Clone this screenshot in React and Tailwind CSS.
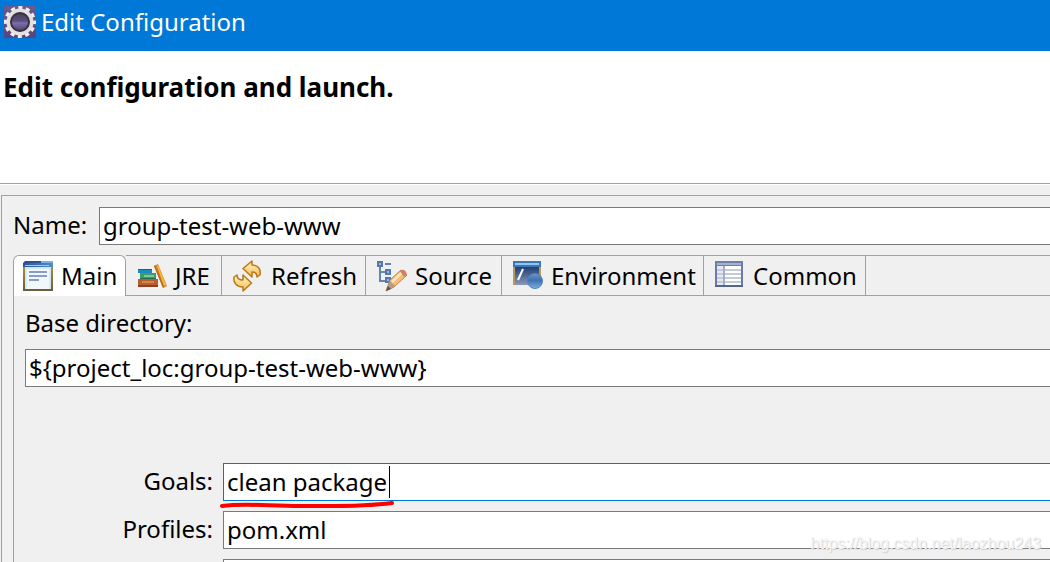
import React, { useState } from 'react';

function EclipseIcon() {
  return (
    <svg viewBox="0 0 32 32" className="w-8 h-8 shrink-0" aria-hidden="true">
      <defs>
        <linearGradient id="gearBg" x1="0" y1="0" x2="0" y2="1">
          <stop offset="0" stopColor="#6b5a91" />
          <stop offset="1" stopColor="#5a4284" />
        </linearGradient>
        <linearGradient id="gearCore" x1="0" y1="0" x2="0" y2="1">
          <stop offset="0" stopColor="#45405a" />
          <stop offset="0.45" stopColor="#5b4f80" />
          <stop offset="0.55" stopColor="#7d6ea8" />
          <stop offset="1" stopColor="#4d4272" />
        </linearGradient>
      </defs>
      <rect width="32" height="32" fill="url(#gearBg)" />
      <circle cx="16" cy="16" r="14" fill="none" stroke="#f0eeec" strokeWidth="4" strokeDasharray="4 3.33" strokeDashoffset="2" />
      <circle cx="16" cy="16" r="11.5" fill="none" stroke="#e4e1de" strokeWidth="4" />
      <circle cx="16" cy="16" r="9" fill="url(#gearCore)" stroke="#38333f" strokeWidth="2" />
    </svg>
  );
}

function MainIcon() {
  return (
    <svg viewBox="0 0 30 32" className="w-[30px] h-8 shrink-0" aria-hidden="true">
      <defs>
        <linearGradient id="mainFrame" x1="0" y1="0" x2="0" y2="1">
          <stop offset="0" stopColor="#b28a3c" />
          <stop offset="1" stopColor="#6b5a3a" />
        </linearGradient>
        <linearGradient id="mainBar" x1="0" y1="0" x2="1" y2="0">
          <stop offset="0" stopColor="#2c5294" />
          <stop offset="1" stopColor="#4d8cc8" />
        </linearGradient>
      </defs>
      <rect x="0" y="7" width="30" height="24" fill="url(#mainFrame)" />
      <rect x="2" y="7" width="26" height="22" fill="#d0ebf2" />
      <rect x="4" y="9" width="22" height="20" fill="#f0f8fa" />
      <path d="M2 1h16l2 4H0V3z" fill="#2c5294" />
      <path d="M18 1h12v4H20v-2h-2z" fill="#76b3df" />
      <rect x="0" y="3" width="30" height="4" fill="url(#mainBar)" />
      <rect x="2" y="5" width="24" height="1" fill="#9bcaf0" />
      <rect x="6" y="11" width="18" height="2" fill="#8a9cc9" />
      <rect x="6" y="15" width="18" height="2" fill="#8a9cc9" />
      <rect x="6" y="19" width="10" height="2" fill="#8a9cc9" />
    </svg>
  );
}

function BooksIcon() {
  return (
    <svg viewBox="0 0 30 32" className="w-[30px] h-8 shrink-0" aria-hidden="true">
      <rect x="1" y="9" width="14" height="4" fill="#1b8cbc" />
      <rect x="1" y="9" width="14" height="1" fill="#126496" />
      <rect x="3" y="13" width="16" height="6" fill="#3c9c70" />
      <rect x="7" y="15" width="10" height="2" fill="#7cc79c" />
      <rect x="3" y="18" width="16" height="1" fill="#20704c" />
      <rect x="1" y="19" width="20" height="8" fill="#b65d32" />
      <rect x="5" y="21" width="12" height="2" fill="#d3844f" />
      <rect x="1" y="25" width="20" height="2" fill="#8e4121" />
      <path d="M17 6l4-2 9 22-4 2z" fill="#d18528" />
      <path d="M20 6l1-1 8 20-2 1z" fill="#f4bc38" />
      <path d="M17 6l1-1 9 22-1 1z" fill="#b96a24" />
    </svg>
  );
}

function RefreshIcon() {
  return (
    <svg viewBox="0 0 30 32" className="w-[30px] h-8 shrink-0" aria-hidden="true">
      <defs>
        <linearGradient id="refreshFill" x1="0" y1="0" x2="0" y2="1">
          <stop offset="0" stopColor="#fff3c4" />
          <stop offset="1" stopColor="#f3c052" />
        </linearGradient>
      </defs>
      <g fill="url(#refreshFill)" stroke="#b8781c" strokeWidth="1.5" strokeLinejoin="round">
        <path d="M10 8.500L19 1v4c6 0 9 4 8 10l-3 2c0-3-1-5-5-5v5z" />
        <path d="M18.500 23L10 31v-4C4 27 0 23 1 17l3-2c0 3 2 5 6 5v-5z" />
      </g>
    </svg>
  );
}

function SourceIcon() {
  return (
    <svg viewBox="0 0 30 32" className="w-[30px] h-8 shrink-0" aria-hidden="true">
      <path d="M3 6v15h6M3 12h6M8 4h6" fill="none" stroke="#6382b7" strokeWidth="2" />
      <g fill="#9bb3d8" stroke="#5577b0" strokeWidth="2">
        <rect x="1" y="2" width="4" height="4" />
        <rect x="9" y="10" width="4" height="4" />
        <rect x="9" y="18" width="4" height="4" />
      </g>
      <path d="M9 31l4-11L24 10l6 5-13 12z" fill="#f4bd7a" stroke="#b78048" strokeWidth="1" />
      <path d="M15 22L25 12.500" stroke="#ffe2b4" strokeWidth="2.500" />
      <path d="M23 11l2-1c2-1 6 3 4 5l-2 2z" fill="#c98268" />
      <path d="M9 31l4-10 5 5z" fill="#b69b85" />
      <path d="M9 31l2-5 3 3z" fill="#5c5350" />
    </svg>
  );
}

function EnvironmentIcon() {
  return (
    <svg viewBox="0 0 30 32" className="w-[30px] h-8 shrink-0" aria-hidden="true">
      <defs>
        <linearGradient id="envScreen" x1="0" y1="0" x2="0" y2="1">
          <stop offset="0" stopColor="#1f3f75" />
          <stop offset="1" stopColor="#8b98ba" />
        </linearGradient>
        <linearGradient id="envBall" x1="0" y1="0" x2="0" y2="1">
          <stop offset="0" stopColor="#7095c5" />
          <stop offset="0.45" stopColor="#3e72b1" />
          <stop offset="1" stopColor="#7cb0dc" />
        </linearGradient>
      </defs>
      <rect x="0" y="6" width="28" height="19" fill="#b79a58" />
      <rect x="2" y="7" width="24" height="18" fill="url(#envScreen)" />
      <rect x="0" y="1" width="28" height="6" fill="#3c76b7" />
      <rect x="2" y="3" width="24" height="2" fill="#91c6ed" />
      <path d="M5 20L10 9" stroke="#fff" strokeWidth="2" />
      <circle cx="22" cy="21" r="7.500" fill="url(#envBall)" stroke="#4f83bb" strokeWidth="1" />
    </svg>
  );
}

function CommonIcon() {
  return (
    <svg viewBox="0 0 30 32" className="w-[30px] h-8 shrink-0" aria-hidden="true">
      <rect x="1" y="2" width="26" height="24" fill="#fff" stroke="#6b7ba4" strokeWidth="2" />
      <rect x="0" y="1" width="28" height="5" fill="#6e7fa9" />
      <rect x="2" y="3" width="24" height="2" fill="#a6b2cd" />
      <rect x="2" y="6" width="7" height="19" fill="#e5e9f2" />
      <path d="M2 10h24M2 14h24M2 18h24M2 22h24" stroke="#c5cada" strokeWidth="2" />
      <path d="M9 6v19" stroke="#a5aec7" strokeWidth="2" />
      <rect x="0" y="25" width="28" height="2" fill="#53648f" />
    </svg>
  );
}

const tabs = [
  { name: 'Main', icon: MainIcon, width: 'w-[113px]' },
  { name: 'JRE', icon: BooksIcon, width: 'w-24' },
  { name: 'Refresh', icon: RefreshIcon, width: 'w-36' },
  { name: 'Source', icon: SourceIcon, width: 'w-[136px]' },
  { name: 'Environment', icon: EnvironmentIcon, width: 'w-[202px]' },
  { name: 'Common', icon: CommonIcon, width: 'w-[162px]' },
];

const inputBase = 'h-[38px] min-w-0 flex-1 border border-r-0 bg-white pb-[2px] pl-[3px] outline-none';

function Tab({ tab, active, onSelect }) {
  const Icon = tab.icon;
  return (
    <button
      type="button"
      role="tab"
      aria-selected={active}
      onClick={onSelect}
      className={`${tab.width} flex shrink-0 items-center gap-2 border-r border-[#a0a0a0] whitespace-nowrap ${
        active ? 'rounded-t-md border-l border-t bg-white pl-[9px]' : 'border-y pl-[11px] pt-px'
      }`}
    >
      <Icon />
      <span>{tab.name}</span>
    </button>
  );
}

function Row({ id, label, value, onChange, focused, children }) {
  return (
    <div className="flex items-center">
      <label htmlFor={id} className="w-[199px] shrink-0 pb-[2px] pr-[10px] text-right">
        {label}
      </label>
      <div className="relative flex flex-1">
        <input
          id={id}
          value={value}
          onChange={onChange}
          className={`${inputBase} ${focused ? 'border-[#0078d7]' : 'border-[#7a7a7a]'}`}
        />
        {children}
      </div>
    </div>
  );
}

export default function App() {
  const [active, setActive] = useState('Main');
  const [form, setForm] = useState({
    name: 'group-test-web-www',
    base: '${project_loc:group-test-web-www}',
    goals: 'clean package',
    profiles: 'pom.xml',
    settings: '',
  });

  const update = (key) => (e) => setForm({ ...form, [key]: e.target.value });

  return (
    <div className="relative h-screen overflow-hidden bg-[#f0f0f0] text-2xl text-black font-['Noto_Sans','Open_Sans',sans-serif]">
      <header className="flex h-[51px] items-center gap-[5px] bg-[#0078d7] pb-[7px] pl-1 text-white">
        <EclipseIcon />
        <h1>Edit Configuration</h1>
      </header>

      <div className="h-[133px] border-b border-[#a0a0a0] bg-white pl-[3px] pt-5">
        <h2 className="text-[26px] leading-8 font-bold">Edit configuration and launch.</h2>
      </div>
      <div className="h-px bg-white" />

      <main className="ml-px mt-[10px] h-screen border-l border-t border-[#a0a0a0] pl-[11px] pt-[11px]">
        <div className="flex items-center">
          <label htmlFor="name" className="w-[86px] shrink-0 pb-[2px]">Name:</label>
          <input id="name" value={form.name} onChange={update('name')} className={`${inputBase} border-[#7a7a7a]`} />
        </div>

        <div role="tablist" className="mt-[10px] flex h-[41px]">
          {tabs.map((tab) => (
            <Tab key={tab.name} tab={tab} active={tab.name === active} onSelect={() => setActive(tab.name)} />
          ))}
          <div className="flex-1 border-y border-[#a0a0a0]" />
        </div>

        <section role="tabpanel" className="h-screen border-l border-[#a0a0a0] pt-[11px]">
          <div className="pl-[11px]">
            <label htmlFor="base" className="block">Base directory:</label>
            <div className="mt-[10px] flex">
              <input id="base" value={form.base} onChange={update('base')} className={`${inputBase} border-[#7a7a7a]`} />
            </div>
          </div>

          <div className="mt-[76px] flex flex-col gap-[10px] pl-[10px]">
            <Row id="goals" label="Goals:" value={form.goals} onChange={update('goals')} focused>
              {/* text cursor */}
              <span className="absolute left-[166px] top-[3px] h-8 w-px bg-black" />
              <svg viewBox="0 0 176 10" className="absolute -left-[3px] top-[37px] h-[10px] w-44" aria-hidden="true">
                <path d="M2 6C25 3 48 6 80 6s62 1 92-3" fill="none" stroke="#fe0000" strokeWidth="4" strokeLinecap="round" />
              </svg>
            </Row>
            <Row id="profiles" label="Profiles:" value={form.profiles} onChange={update('profiles')} />
            <Row id="settings" label="" value={form.settings} onChange={update('settings')} />
          </div>
        </section>
      </main>

      <span className="pointer-events-none absolute bottom-[6px] right-[9px] text-base text-[#f4f4f4] font-['Liberation_Sans',sans-serif] [text-shadow:1px_1px_1px_#d0d0d0]">
        https://blog.csdn.net/laozhou243
      </span>
    </div>
  );
}
